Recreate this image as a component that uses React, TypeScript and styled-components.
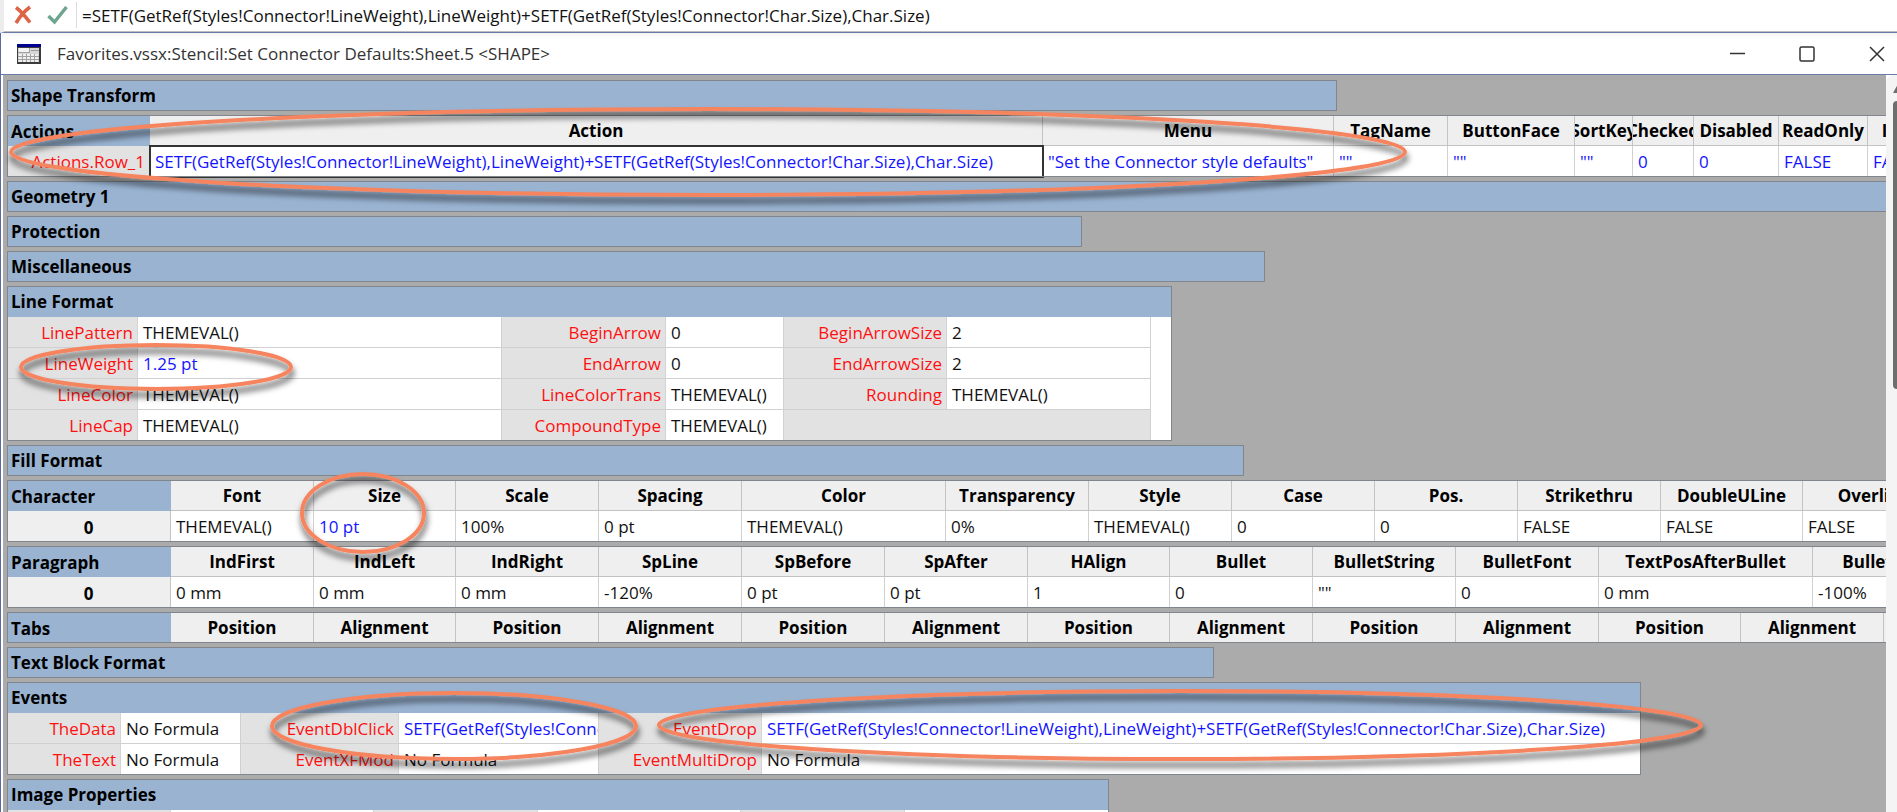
import React from "react";
import styled, { createGlobalStyle, css } from "styled-components";

const GlobalStyle = createGlobalStyle`
  *, *::before, *::after { box-sizing: border-box; }
  html, body { margin: 0; height: 100%; }
  body {
    overflow: hidden;
    font-family: "Open Sans", "Noto Sans", sans-serif;
    font-size: 17px;
    line-height: 24px;
    color: #000;
  }
  svg { display: block; }
`;

const Shell = styled.div`
  position: relative;
  display: flex;
  flex-direction: column;
  height: 100vh;
  overflow: hidden;
  background: #fff;
`;

const FormulaBar = styled.form`
  display: flex;
  align-items: center;
  flex: none;
  height: 33px;
  padding: 0 0 2px 8px;
  border-left: 4px solid #ececec;
  border-bottom: 1px solid #6b7ba8;
  box-shadow: inset 0 -1px 0 #bdbdbd;
`;

const FormulaActions = styled.div`
  display: flex;
  gap: 14px;
  margin-right: 8px;
`;

const IconButton = styled.button`
  display: flex;
  align-items: center;
  justify-content: center;
  width: 21px;
  height: 24px;
  padding: 0;
  border: 0;
  background: none;
`;

const FormulaInput = styled.input`
  flex: 1;
  min-width: 0;
  height: 26px;
  padding: 0 5px;
  border: 0;
  border-left: 1px solid #dcdcdc;
  outline: 0;
  background: none;
  font: inherit;
  color: #111;
`;

const SheetWindow = styled.main`
  display: flex;
  flex-direction: column;
  flex: 1;
  min-height: 0;
  border-left: 1px solid #5a6aa0;
`;

const TitleBar = styled.header`
  display: flex;
  align-items: center;
  flex: none;
  height: 42px;
  padding: 0 8px 0 16px;
  border-bottom: 1px solid #6b7ba8;
  background: linear-gradient(#f4f4f4, #fff 6px);
`;

const Title = styled.h1`
  flex: 1;
  margin: 0 0 0 16px;
  font-size: 17px;
  font-weight: 400;
  color: #333;
`;

const WindowControls = styled.div`
  display: flex;
  gap: 46px;
`;

const ControlButton = styled.button`
  display: flex;
  align-items: center;
  justify-content: center;
  width: 24px;
  height: 24px;
  padding: 0;
  border: 0;
  background: none;
`;

const Body = styled.div`
  display: flex;
  flex: 1;
  min-height: 0;
`;

const Sheet = styled.div`
  display: flex;
  flex-direction: column;
  align-items: flex-start;
  gap: 4px;
  flex: 1;
  min-width: 0;
  margin-left: 2px;
  padding: 5px 0 0 4px;
  overflow: hidden;
  background: #ababab;
`;

const ScrollTrack = styled.div`
  flex: none;
  width: 11px;
  padding: 9px 0 0 7px;
  overflow: hidden;
  border-top-left-radius: 8px;
  background: #f4f4f4;
`;

const ScrollThumb = styled.div`
  width: 8px;
  height: 288px;
  margin-top: 8px;
  border-radius: 4px 0 0 4px;
  background: #6e6e6e;
`;

const Section = styled.section<{ $width: number }>`
  flex: none;
  width: ${(p) => p.$width}px;
  outline: 1px solid #80868c;
  outline-offset: -1px;
  background: #fff;
`;

const barText = css`
  height: 31px;
  padding: 2px 4px 0;
  overflow: hidden;
  font-size: 17px;
  font-weight: 700;
  line-height: 24px;
  white-space: nowrap;
`;

const SectionBar = styled.h2`
  ${barText}
  margin: 0;
  padding-top: 4px;
  background: #99b3d1;
`;

const Grid = styled.table`
  table-layout: fixed;
  width: 100%;
  border-collapse: separate;
  border-spacing: 0;
`;

const CornerHead = styled.th`
  ${barText}
  background: #99b3d1;
  text-align: left;
`;

const ColumnHead = styled.th`
  ${barText}
  border-right: 1px solid #c3c3c3;
  border-bottom: 1px solid #c3c3c3;
  background: #efefef;
  text-align: center;
`;

const HeadText = styled.span`
  display: flex;
  justify-content: center;
  margin: 0 -4px;
  overflow: hidden;
`;

const RowHead = styled.th`
  ${barText}
  border-right: 1px solid #c3c3c3;
  background: #efefef;
  text-align: center;
`;

const LabelCell = styled.th`
  height: 31px;
  padding: 1px 4px 0;
  border-right: 1px solid #d4d4d4;
  border-bottom: 1px solid #d0d0d0;
  background: #e2e2e2;
  color: #ff1010;
  font-weight: 400;
  text-align: right;
  white-space: nowrap;
`;

const ValueCell = styled.td<{ $local?: boolean; $selected?: boolean }>`
  height: 31px;
  padding: 1px 4px 0 5px;
  overflow: hidden;
  border-right: 1px solid #d0d0d0;
  border-bottom: 1px solid #d0d0d0;
  background: #fff;
  color: ${(p) => (p.$local ? "#1414ff" : "#111")};
  white-space: nowrap;
  ${(p) =>
    p.$selected &&
    css`
      outline: 2px solid #333;
      outline-offset: -1px;
    `}
`;

const Filler = styled.td<{ $plain?: boolean }>`
  height: 31px;
  padding: 0;
  border-right: 1px solid #d0d0d0;
  background: ${(p) => (p.$plain ? "#fff" : "#e2e2e2")};
`;

const Annotations = styled.svg`
  position: absolute;
  top: 0;
  left: 0;
  overflow: visible;
  pointer-events: none;
`;

type Value = string | { text: string; local?: boolean; selected?: boolean };

const local = (text: string, selected = false): Value => ({ text, local: true, selected });

const FORMULA =
  "SETF(GetRef(Styles!Connector!LineWeight),LineWeight)+SETF(GetRef(Styles!Connector!Char.Size),Char.Size)";

const sum = (n: number[]) => n.reduce((a, b) => a + b, 0);

function Cell({ value }: { value: Value }) {
  if (typeof value === "string") return <ValueCell>{value}</ValueCell>;
  return (
    <ValueCell $local={value.local} $selected={value.selected}>
      {value.text}
    </ValueCell>
  );
}

function Columns({ widths }: { widths: number[] }) {
  return (
    <colgroup>
      {widths.map((w, i) => (
        <col key={i} width={w} />
      ))}
    </colgroup>
  );
}

function ClosedSection({ title, width }: { title: string; width: number }) {
  return (
    <Section $width={width}>
      <SectionBar>{title}</SectionBar>
    </Section>
  );
}

interface ColumnSectionProps {
  title: string;
  widths: number[];
  heads: string[];
  row?: { name: string; named?: boolean; values: Value[] };
}

function ColumnSection({ title, widths, heads, row }: ColumnSectionProps) {
  return (
    <Section $width={sum(widths)}>
      <Grid>
        <Columns widths={widths} />
        <thead>
          <tr>
            <CornerHead scope="col">{title}</CornerHead>
            {heads.map((h, i) => (
              <ColumnHead scope="col" key={i}>
                <HeadText>{h}</HeadText>
              </ColumnHead>
            ))}
          </tr>
        </thead>
        {row && (
          <tbody>
            <tr>
              {row.named ? (
                <LabelCell scope="row">{row.name}</LabelCell>
              ) : (
                <RowHead scope="row">{row.name}</RowHead>
              )}
              {row.values.map((v, i) => (
                <Cell key={i} value={v} />
              ))}
            </tr>
          </tbody>
        )}
      </Grid>
    </Section>
  );
}

interface PairSectionProps {
  title: string;
  widths: number[];
  rows: [string, Value][][];
  margin?: boolean;
}

function PairSection({ title, widths, rows, margin }: PairSectionProps) {
  const pairs = Math.floor(widths.length / 2);
  return (
    <Section $width={sum(widths)}>
      <SectionBar>{title}</SectionBar>
      <Grid>
        <Columns widths={widths} />
        <tbody>
          {rows.map((row, r) => (
            <tr key={r}>
              {row.map(([name, value], i) => (
                <React.Fragment key={i}>
                  <LabelCell scope="row">{name}</LabelCell>
                  <Cell value={value} />
                </React.Fragment>
              ))}
              {row.length < pairs && <Filler colSpan={(pairs - row.length) * 2} />}
              {margin && <Filler $plain />}
            </tr>
          ))}
        </tbody>
      </Grid>
    </Section>
  );
}

const MARKS = [
  { cx: 708, cy: 152, rx: 697, ry: 43 },
  { cx: 156, cy: 367, rx: 135, ry: 22 },
  { cx: 363, cy: 513, rx: 61, ry: 39 },
  { cx: 454, cy: 726, rx: 182, ry: 33 },
  { cx: 1180, cy: 725, rx: 521, ry: 34 },
];

function SheetIcon() {
  return (
    <svg width="24" height="20" viewBox="0 0 24 20" aria-hidden="true">
      <rect width="24" height="20" fill="#3c3c3c" />
      <rect width="24" height="3" fill="#000090" />
      <rect x="1" y="4" width="21" height="14" fill="#d6d6d6" />
      <rect x="2" y="4" width="10" height="4" fill="#f2f2f2" />
      <rect x="2" y="10" width="19" height="8" fill="#efefef" />
      <path
        d="M1 8.5H13M12.5 4V9M14 6.500H22M1 12.5H22M1 15.5H22M5.500 10V18M9.500 10V18M13.500 10V18M17.500 10V18"
        stroke="#a0a0a0"
      />
    </svg>
  );
}

export default function App() {
  return (
    <Shell>
      <GlobalStyle />
      <FormulaBar onSubmit={(e) => e.preventDefault()}>
        <FormulaActions>
          <IconButton type="button" aria-label="Cancel">
            <svg width="18" height="20" viewBox="0 0 18 20">
              <path d="M2 2.500Q8 7 16 17.500M16 2Q8 8 2 18" fill="none" stroke="#dd6446" strokeWidth="3.500" />
            </svg>
          </IconButton>
          <IconButton type="submit" aria-label="Enter">
            <svg width="21" height="20" viewBox="0 0 21 20">
              <path d="M1.500 11L7.500 17L19.500 2" fill="none" stroke="#6fa58f" strokeWidth="3.500" />
            </svg>
          </IconButton>
        </FormulaActions>
        <FormulaInput aria-label="Formula" defaultValue={"=" + FORMULA} />
      </FormulaBar>

      <SheetWindow>
        <TitleBar>
          <SheetIcon />
          <Title>Favorites.vssx:Stencil:Set Connector Defaults:Sheet.5 &lt;SHAPE&gt;</Title>
          <WindowControls>
            <ControlButton aria-label="Minimize">
              <svg width="16" height="16" viewBox="0 0 16 16">
                <path d="M1 7.500H16" stroke="#333" strokeWidth="1.500" />
              </svg>
            </ControlButton>
            <ControlButton aria-label="Maximize">
              <svg width="16" height="16" viewBox="0 0 16 16">
                <rect x="1" y="1" width="14" height="14" rx="1.500" fill="none" stroke="#333" strokeWidth="1.500" />
              </svg>
            </ControlButton>
            <ControlButton aria-label="Close">
              <svg width="16" height="16" viewBox="0 0 16 16">
                <path d="M1 1L15 15M15 1L1 15" stroke="#333" strokeWidth="1.500" />
              </svg>
            </ControlButton>
          </WindowControls>
        </TitleBar>

        <Body>
          <Sheet>
            <ClosedSection title="Shape Transform" width={1330} />
            <ColumnSection
              title="Actions"
              widths={[143, 893, 291, 114, 127, 58, 61, 85, 89, 100]}
              heads={["Action", "Menu", "TagName", "ButtonFace", "SortKey", "Checked", "Disabled", "ReadOnly", "Invisible"]}
              row={{
                name: "Actions.Row_1",
                named: true,
                values: [
                  local(FORMULA, true),
                  local('"Set the Connector style defaults"'),
                  local('""'),
                  local('""'),
                  local('""'),
                  local("0"),
                  local("0"),
                  local("FALSE"),
                  local("FALSE"),
                ],
              }}
            />
            <ClosedSection title="Geometry 1" width={1960} />
            <ClosedSection title="Protection" width={1075} />
            <ClosedSection title="Miscellaneous" width={1258} />
            <PairSection
              title="Line Format"
              widths={[131, 364, 164, 118, 163, 204, 21]}
              margin
              rows={[
                [["LinePattern", "THEMEVAL()"], ["BeginArrow", "0"], ["BeginArrowSize", "2"]],
                [["LineWeight", local("1.25 pt")], ["EndArrow", "0"], ["EndArrowSize", "2"]],
                [["LineColor", "THEMEVAL()"], ["LineColorTrans", "THEMEVAL()"], ["Rounding", "THEMEVAL()"]],
                [["LineCap", "THEMEVAL()"], ["CompoundType", "THEMEVAL()"]],
              ]}
            />
            <ClosedSection title="Fill Format" width={1237} />
            <ColumnSection
              title="Character"
              widths={[164, 143, 142, 143, 143, 204, 143, 143, 143, 143, 143, 142, 143]}
              heads={["Font", "Size", "Scale", "Spacing", "Color", "Transparency", "Style", "Case", "Pos.", "Strikethru", "DoubleULine", "Overline"]}
              row={{
                name: "0",
                values: ["THEMEVAL()", local("10 pt"), "100%", "0 pt", "THEMEVAL()", "0%", "THEMEVAL()", "0", "0", "FALSE", "FALSE", "FALSE"],
              }}
            />
            <ColumnSection
              title="Paragraph"
              widths={[164, 143, 142, 143, 143, 143, 143, 142, 143, 143, 143, 214, 143]}
              heads={["IndFirst", "IndLeft", "IndRight", "SpLine", "SpBefore", "SpAfter", "HAlign", "Bullet", "BulletString", "BulletFont", "TextPosAfterBullet", "BulletSize"]}
              row={{
                name: "0",
                values: ["0 mm", "0 mm", "0 mm", "-120%", "0 pt", "0 pt", "1", "0", '""', "0", "0 mm", "-100%"],
              }}
            />
            <ColumnSection
              title="Tabs"
              widths={[164, 143, 142, 143, 143, 143, 143, 142, 143, 143, 143, 142, 143, 143]}
              heads={["Position", "Alignment", "Position", "Alignment", "Position", "Alignment", "Position", "Alignment", "Position", "Alignment", "Position", "Alignment", ""]}
            />
            <ClosedSection title="Text Block Format" width={1207} />
            <PairSection
              title="Events"
              widths={[114, 120, 158, 200, 163, 879]}
              rows={[
                [["TheData", "No Formula"], ["EventDblClick", local(FORMULA)], ["EventDrop", local(FORMULA)]],
                [["TheText", "No Formula"], ["EventXFMod", "No Formula"], ["EventMultiDrop", "No Formula"]],
              ]}
            />
            <PairSection
              title="Image Properties"
              widths={[164, 203, 164, 203, 164, 204]}
              rows={[[["", ""], ["", ""], ["", ""]]]}
            />
          </Sheet>
          <ScrollTrack>
            <svg width="16" height="9" viewBox="0 0 16 9" aria-hidden="true">
              <path d="M0 9L5 0L10 9Z" fill="#6e6e6e" />
            </svg>
            <ScrollThumb />
          </ScrollTrack>
        </Body>
      </SheetWindow>

      <Annotations width="1720" height="780" aria-hidden="true">
        <defs>
          <filter id="shade" filterUnits="userSpaceOnUse" x="0" y="90" width="1720" height="700">
            <feDropShadow dx="1" dy="6" stdDeviation="3" floodColor="#000" floodOpacity="0.7" />
          </filter>
        </defs>
        <g fill="none" stroke="#f5845f" strokeWidth="4" filter="url(#shade)">
          {MARKS.map((m, i) => (
            <ellipse key={i} {...m} />
          ))}
        </g>
      </Annotations>
    </Shell>
  );
}
